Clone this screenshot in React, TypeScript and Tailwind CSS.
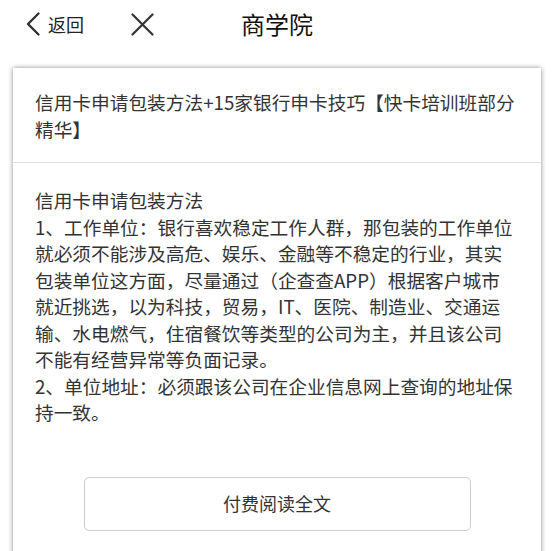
import React from "react"

// Line breaks follow the reference exactly
const titleLines = ["信用卡申请包装方法+15家银行申卡技巧【快卡培训班部分", "精华】"]

const bodyLines = [
  "信用卡申请包装方法",
  "1、工作单位：银行喜欢稳定工作人群，那包装的工作单位",
  "就必须不能涉及高危、娱乐、金融等不稳定的行业，其实",
  "包装单位这方面，尽量通过（企查查APP）根据客户城市",
  "就近挑选，以为科技，贸易，IT、医院、制造业、交通运",
  "输、水电燃气，住宿餐饮等类型的公司为主，并且该公司",
  "不能有经营异常等负面记录。",
  "2、单位地址：必须跟该公司在企业信息网上查询的地址保",
  "持一致。",
]

function BackChevron() {
  return (
    <svg width="14" height="24" viewBox="0 0 14 24" fill="none" className="block">
      <path d="M12.5 1.5 L2 12 L12.5 22.5" stroke="#2b2b2b" strokeWidth="2.2" strokeLinecap="round" strokeLinejoin="round" />
    </svg>
  )
}

function CloseIcon() {
  return (
    <svg width="23" height="23" viewBox="0 0 23 23" fill="none" className="block">
      <path d="M1.5 1.5 L21.5 21.5 M21.5 1.5 L1.5 21.5" stroke="#333" strokeWidth="2.2" strokeLinecap="round" />
    </svg>
  )
}

export default function App() {
  return (
    <div
      className="min-h-[551px] w-[554px] bg-white text-[#333] overflow-hidden"
      style={{ fontFamily: '"Noto Sans CJK SC", "Noto Sans", sans-serif' }}
    >
      {/* Nav bar */}
      <div className="grid h-[48px] grid-cols-[1fr_auto_1fr] items-center">
        <div className="flex items-center pl-[26px]">
          <div className="flex items-center gap-[8px]">
            <BackChevron />
            <span className="text-[18px] leading-none text-[#222]">返回</span>
          </div>
          <div className="ml-[47px]">
            <CloseIcon />
          </div>
        </div>
        <div className="text-[24px] leading-none text-[#111]">商学院</div>
        <div />
      </div>

      {/* Article card */}
      <div className="mx-[13px] mt-[20px] bg-white shadow-[0_0_5px_rgba(0,0,0,0.45)]">
        <div className="border-b border-[#ddd] pt-[20px] pb-[20px] pl-[22px] pr-[10px] text-[18.7px] leading-[27px] text-[#333]">
          {titleLines.map((l, i) => (
            <div key={i} className="whitespace-nowrap">
              {l}
            </div>
          ))}
        </div>

        <div className="pt-[24px] pl-[22px] pr-[10px] text-[18.7px] leading-[26.5px] text-[#333]">
          {bodyLines.map((l, i) => (
            <div key={i} className="whitespace-nowrap">
              {l}
            </div>
          ))}
        </div>

        <div className="flex justify-center pt-[51px] pb-[40px]">
          <button className="flex h-[54px] w-[387px] items-center justify-center rounded-[5px] border border-[#ccc] bg-white text-[18px] text-[#333]">
            付费阅读全文
          </button>
        </div>
      </div>
    </div>
  )
}
